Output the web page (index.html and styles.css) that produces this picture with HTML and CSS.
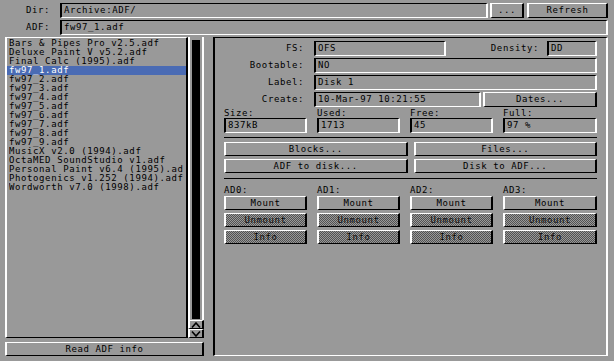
FILE: index.html
```html
<!DOCTYPE html>
<html lang="en">
<head>
    <meta charset="UTF-8">
    <title>ADF Info</title>
    <link rel="stylesheet" href="styles.css">
</head>
<body>
    <div class="window">
        <!-- Path rows -->
        <div class="path-row">
            <span class="path-label">Dir:</span>
            <div class="field path-field">Archive:ADF/</div>
            <button class="btn dots-btn">...</button>
            <button class="btn refresh-btn">Refresh</button>
        </div>
        <div class="path-row">
            <span class="path-label">ADF:</span>
            <div class="field path-field">fw97_1.adf</div>
        </div>

        <div class="main">
            <!-- File browser -->
            <div class="browser">
                <div class="browser-body">
                    <ul class="file-list">
                        <li><span>Bars &amp; Pipes Pro v2.5.adf</span></li>
                        <li><span>Deluxe Paint V v5.2.adf</span></li>
                        <li><span>Final Calc (1995).adf</span></li>
                        <li class="selected"><span>fw97_1.adf</span></li>
                        <li><span>fw97_2.adf</span></li>
                        <li><span>fw97_3.adf</span></li>
                        <li><span>fw97_4.adf</span></li>
                        <li><span>fw97_5.adf</span></li>
                        <li><span>fw97_6.adf</span></li>
                        <li><span>fw97_7.adf</span></li>
                        <li><span>fw97_8.adf</span></li>
                        <li><span>fw97_9.adf</span></li>
                        <li><span>MusicX v2.0 (1994).adf</span></li>
                        <li><span>OctaMED SoundStudio v1.adf</span></li>
                        <li><span>Personal Paint v6.4 (1995).adf</span></li>
                        <li><span>Photogenics v1.252 (1994).adf</span></li>
                        <li><span>Wordworth v7.0 (1998).adf</span></li>
                    </ul>
                    <div class="scroller">
                        <div class="track"><div class="knob"></div></div>
                        <button class="btn arrow">
                            <svg width="10" height="6" viewBox="0 0 10 6"><polyline points="1,5.5 5,1 9,5.5" fill="none" stroke="#000" stroke-width="1.6"/></svg>
                        </button>
                        <button class="btn arrow">
                            <svg width="10" height="6" viewBox="0 0 10 6"><polyline points="1,0.5 5,5 9,0.5" fill="none" stroke="#000" stroke-width="1.6"/></svg>
                        </button>
                    </div>
                </div>
                <button class="btn read-btn">Read ADF info</button>
            </div>

            <!-- Info panel -->
            <div class="panel">
                <div class="info-row">
                    <span class="info-label">FS:</span>
                    <div class="field fs-field">OFS</div>
                    <span class="density-label">Density:</span>
                    <div class="field density-field">DD</div>
                </div>
                <div class="info-row">
                    <span class="info-label">Bootable:</span>
                    <div class="field wide-field">NO</div>
                </div>
                <div class="info-row">
                    <span class="info-label">Label:</span>
                    <div class="field wide-field">Disk 1</div>
                </div>
                <div class="info-row">
                    <span class="info-label">Create:</span>
                    <div class="field create-field">10-Mar-97 10:21:55</div>
                    <button class="btn dates-btn">Dates...</button>
                </div>

                <div class="stats">
                    <div class="stat">
                        <div class="stat-label">Size:</div>
                        <div class="field stat-field">837kB</div>
                    </div>
                    <div class="stat">
                        <div class="stat-label">Used:</div>
                        <div class="field stat-field">1713</div>
                    </div>
                    <div class="stat">
                        <div class="stat-label">Free:</div>
                        <div class="field stat-field">45</div>
                    </div>
                    <div class="stat">
                        <div class="stat-label">Full:</div>
                        <div class="field stat-field">97 %</div>
                    </div>
                </div>

                <div class="separator"></div>

                <div class="actions">
                    <button class="btn">Blocks...</button>
                    <button class="btn">Files...</button>
                    <button class="btn">ADF to disk...</button>
                    <button class="btn">Disk to ADF...</button>
                </div>

                <div class="separator sep-drives"></div>

                <div class="drives">
                    <div class="drive">
                        <div class="drive-label">AD0:</div>
                        <button class="btn">Mount</button>
                        <button class="btn ghost">Unmount</button>
                        <button class="btn ghost">Info</button>
                    </div>
                    <div class="drive">
                        <div class="drive-label">AD1:</div>
                        <button class="btn">Mount</button>
                        <button class="btn ghost">Unmount</button>
                        <button class="btn ghost">Info</button>
                    </div>
                    <div class="drive">
                        <div class="drive-label">AD2:</div>
                        <button class="btn">Mount</button>
                        <button class="btn ghost">Unmount</button>
                        <button class="btn ghost">Info</button>
                    </div>
                    <div class="drive">
                        <div class="drive-label">AD3:</div>
                        <button class="btn">Mount</button>
                        <button class="btn ghost">Unmount</button>
                        <button class="btn ghost">Info</button>
                    </div>
                </div>
            </div>
        </div>
    </div>
</body>
</html>
```

FILE: styles.css
```css
/* General */
body {
    margin: 0;
    background: #999;
    color: #000;
    font: 9px/9px "DejaVu Sans Mono", monospace;
    letter-spacing: 0.6px; /* keeps the 6px character cell */
}

.window {
    width: 614px;
    height: 361px;
    box-sizing: border-box;
    padding: 3px 6px 0 5px;
    display: flex;
    flex-direction: column;
}

/* Raised and recessed bevels */
.btn {
    box-sizing: border-box;
    height: 14px;
    padding: 0;
    border-style: solid;
    border-width: 1px 2px;
    border-color: #fff #000 #000 #fff;
    background: #999;
    color: #000;
    font: inherit;
    letter-spacing: inherit;
    line-height: 12px;
    text-align: center;
    white-space: nowrap;
}

.field {
    box-sizing: border-box;
    height: 15px;
    padding-left: 2px;
    border-style: solid;
    border-width: 1px 2px;
    border-color: #000 #fff #fff #000;
    line-height: 13px;
    white-space: nowrap;
    overflow: hidden;
}

/* Disabled gadgets get the dotted ghost pattern */
.btn.ghost {
    position: relative;
}

.btn.ghost::after {
    content: "";
    position: absolute;
    inset: 0;
    background-image: repeating-conic-gradient(#222 0 25%, transparent 0 50%);
    background-size: 2px 2px;
    opacity: 0.6;
}

/* Path rows */
.path-row {
    display: flex;
    height: 15px;
    margin-bottom: 2px;
}

.path-label {
    width: 45px;
    margin-right: 10px;
    text-align: right;
    line-height: 15px;
}

.path-field {
    flex: 1;
}

.path-row .btn {
    height: 15px;
    line-height: 13px;
}

.dots-btn {
    width: 34px;
    margin-left: 2px;
}

.refresh-btn {
    width: 81px;
    margin-left: 3px;
}

.main {
    display: flex;
    gap: 9px;
    height: 319px;
}

/* File browser */
.browser {
    width: 199px;
    display: flex;
    flex-direction: column;
}

.browser-body {
    display: flex;
    height: 301px;
}

.file-list {
    flex: 1;
    margin: 0;
    padding: 1px 0 0;
    list-style: none;
    border-style: solid;
    border-width: 1px 2px;
    border-color: #fff #000 #000 #fff;
    overflow: hidden;
}

.file-list li {
    height: 9px;
    padding-left: 2px;
}

.file-list li span {
    display: block;
    width: 174px;
    overflow-x: clip;
    overflow-y: visible;
    white-space: nowrap;
}

.file-list li.selected {
    background: #4a6bb4;
    color: #fff;
}

.scroller {
    width: 16px;
    display: flex;
    flex-direction: column;
}

.track {
    flex: 1;
    display: flex;
    padding: 3px 2px 1px;
    border-left: 2px solid #fff;
    border-right: 2px solid #fff;
}

.knob {
    flex: 1;
    background: #000;
}

.arrow {
    width: 16px;
    height: 9px;
    display: flex;
    align-items: center;
    justify-content: center;
}

.arrow svg {
    display: block;
}

.read-btn {
    margin-top: 4px;
}

/* Info panel */
.panel {
    flex: 1;
    padding: 3px 9px 0;
    border-style: solid;
    border-width: 1px 2px;
    border-color: #000 #fff #fff #000;
}

.info-row {
    display: flex;
    height: 15px;
    margin-bottom: 2px;
}

.info-label {
    width: 80px;
    margin-right: 10px;
    text-align: right;
    line-height: 15px;
}

.fs-field {
    width: 132px;
}

.density-label {
    flex: 1;
    margin-right: 8px;
    text-align: right;
    line-height: 15px;
}

.density-field {
    width: 50px;
}

.wide-field {
    flex: 1;
}

.create-field {
    width: 167px;
    margin-right: 2px;
}

.dates-btn {
    flex: 1;
    height: 15px;
    line-height: 13px;
}

.stats,
.drives {
    display: grid;
    grid-template-columns: 83px 83px 83px 1fr;
    column-gap: 10px;
}

.stat-label,
.drive-label {
    height: 9px;
}

.separator {
    border-top: 1px solid #000;
    margin: 4px 0;
}

.sep-drives {
    margin: 5px 0 7px;
}

.actions {
    display: grid;
    grid-template-columns: 1fr 1fr;
    gap: 3px 6px;
}

.drive {
    display: flex;
    flex-direction: column;
    gap: 3px;
}

.drive-label {
    margin-bottom: -2px;
}
```
